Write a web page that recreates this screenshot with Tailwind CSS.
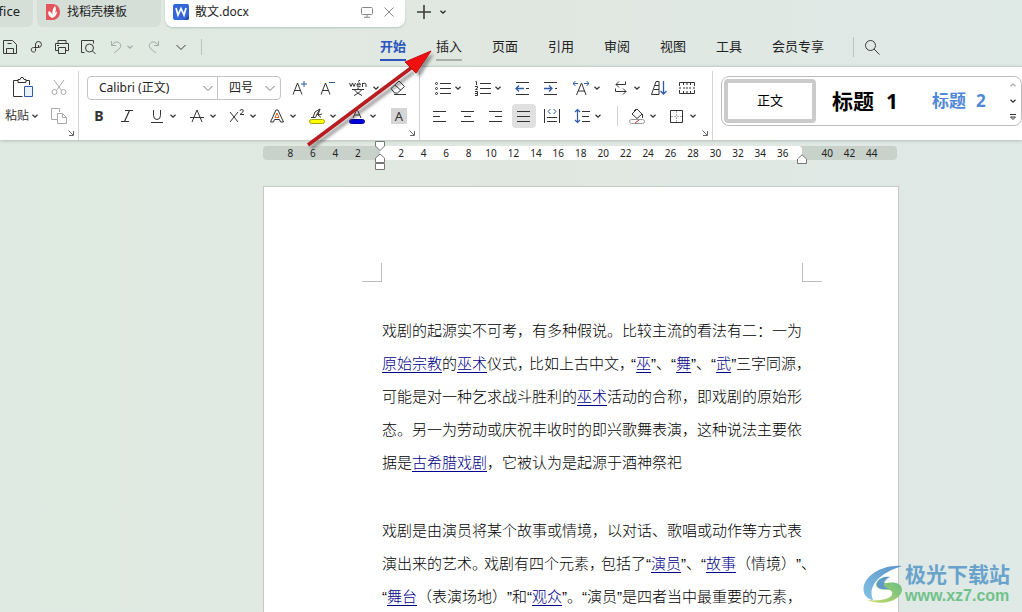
<!DOCTYPE html>
<html lang="zh-CN">
<head>
<meta charset="utf-8">
<title>散文.docx</title>
<script src="https://cdn.jsdelivr.net/npm/@tailwindcss/browser@4"></script>
</head>
<body class="relative flex h-screen flex-col overflow-hidden bg-linear-to-r from-[#dfebe2] via-[#e0e7e1] to-[#dfe9e6] font-['Noto_Sans','Noto_Sans_CJK_SC',sans-serif] text-xs text-[#222]">
<svg class="hidden">
  <symbol id="chev" viewBox="0 0 8 8"><path d="M1.500 2.800 4 5.200 6.500 2.800" fill="none" stroke="currentColor" stroke-width="1.300"/></symbol>
  <symbol id="thin" viewBox="0 0 12 12"><path d="M1.500 4 6 8.500 10.500 4" fill="none" stroke="currentColor"/></symbol>
  <symbol id="launch" viewBox="0 0 6 6"><path d="M.5.5 5 5M5.500 1v4.500H1" fill="none" stroke="#666"/></symbol>
</svg>

<!-- Document tabs -->
<header class="flex h-[27px] shrink-0 items-stretch">
  <button class="flex w-[33px] items-center justify-end overflow-hidden rounded-br-md bg-[#d5dfd8] pr-[13px] pb-[3px] text-[13px]">Office</button>
  <button class="ml-1 flex w-[124px] items-center gap-1.5 rounded-b-md bg-[#d5dfd8] pb-[3px] pl-2">
    <svg class="size-4" viewBox="0 0 16 16"><path d="M1 0h8q6 2 6 8t-6 8H1z" fill="#e5565b"/><path d="M7.500 14C3 12 2.500 9 4 7c2 1 3 2 3.500 4C7 7 8 4 10 2c2 3 .5 7-2 9 1-2 2-3 4-3.500 0 3-1.500 5-4.500 6.500" fill="#fff"/></svg>
    <span>找稻壳模板</span>
  </button>
  <div class="ml-1 flex w-60 items-center rounded-b-lg bg-white pr-2.5 pb-[3px] pl-2 shadow-[0_1px_2px_#b9c5bd]">
    <svg class="size-4" viewBox="0 0 16 16"><rect width="16" height="16" rx="2" fill="#3566d8"/><path d="M11 16h3q2 0 2-2v-3z" fill="#244cae"/><path d="m3 4 2 7 3-6.500L11 11l2-7" fill="none" stroke="#fff" stroke-width="1.700"/></svg>
    <span class="ml-1.5 flex-1">散文.docx</span>
    <button aria-label="窗口"><svg class="h-3 w-3" viewBox="0 0 12 12"><path d="M1.500 1.500h9q1 0 1 1v5q0 1-1 1h-9q-1 0-1-1v-5q0-1 1-1M6 8.500V11M3 11.300h6" fill="none" stroke="#888"/></svg></button>
    <button aria-label="关闭" class="ml-2.5"><svg class="size-3" viewBox="0 0 12 12"><path d="m1.500 1.500 9 9m0-9-9 9" stroke="#888"/></svg></button>
  </div>
  <button aria-label="新建" class="ml-3 pb-[3px]"><svg class="size-3.5" viewBox="0 0 14 14"><path d="M7 0v14M0 7h14" stroke="#3c3c3c" stroke-width="1.600"/></svg></button>
  <button aria-label="更多" class="ml-2 pb-[3px]"><svg class="size-2"><use href="#chev"/></svg></button>
</header>

<!-- Quick access and menu -->
<nav class="flex h-[39px] shrink-0 items-center text-[13px]">
  <div class="flex w-[380px] items-center text-[#3a3a3a]">
    <button aria-label="保存" class="ml-[3px]"><svg class="size-4 fill-none stroke-current" viewBox="0 0 16 16"><path d="M.5 1.500h9l4 4v9H.5zM3.500 14.500v-5h7v5M4.500 4.500h4"/></svg></button>
    <button aria-label="输出" class="ml-2.5"><svg class="size-4 fill-none stroke-current" viewBox="0 0 16 16"><path d="M6.500 9.500V5a3 3 0 1 1 3 3.500H4.500a2.300 2.300 0 1 0 2 3.500v-2.500M9.500 6v2.500"/></svg></button>
    <button aria-label="打印" class="ml-[9px]"><svg class="size-4 fill-none stroke-current" viewBox="0 0 16 16"><path d="M4 5V1.500h8V5M4 11.500H1.500v-7h13v7H12M4.500 8.500h7v6h-7zM3 6.500h2"/></svg></button>
    <button aria-label="打印预览" class="ml-2.5"><svg class="size-4 fill-none stroke-current" viewBox="0 0 16 16"><path d="M4.500 13.500H1.500v-12h12v3"/><circle cx="9.500" cy="9" r="4"/><path d="m12.500 12 3 3"/></svg></button>
    <button aria-label="撤销" class="ml-3.5 flex items-center gap-1 text-[#a5aca7]"><svg class="h-4 w-3 fill-none stroke-current" viewBox="0 0 12 16"><path d="M1.500 2v4.500H6M1.500 6.500Q5 1.500 9 3.500q3.500 3 0 6.500l-5 4"/></svg><svg class="size-2"><use href="#chev"/></svg></button>
    <button aria-label="恢复" class="ml-3.5 text-[#a5aca7]"><svg class="h-4 w-3 fill-none stroke-current" viewBox="0 0 12 16"><path d="M10.500 2v4.500H6M10.500 6.500Q7 1.500 3 3.500-.5 6.500 3 10l5 4"/></svg></button>
    <button aria-label="自定义" class="ml-[15px]"><svg class="size-3"><use href="#thin"/></svg></button>
    <span class="ml-3.5 h-4 w-px bg-[#bac4bd]"></span>
  </div>
  <div class="flex items-center gap-[30px] whitespace-nowrap">
    <button class="h-7 border-y-2 border-t-transparent border-b-[#2a55bd] font-bold text-[#2a55bd]">开始</button>
    <button class="h-7 border-y-2 border-t-transparent border-b-[#a9b0ab]">插入</button>
    <button>页面</button><button>引用</button><button>审阅</button><button>视图</button><button>工具</button><button>会员专享</button>
  </div>
  <span class="ml-[29px] h-5 w-px bg-[#bac4bd]"></span>
  <button aria-label="搜索" class="ml-2.5"><svg class="size-4 fill-none stroke-[#3a3a3a]" viewBox="0 0 16 16"><circle cx="6.500" cy="6.500" r="5"/><path d="m10 10 5.500 5.500"/></svg></button>
</nav>

<!-- Ribbon -->
<section class="flex h-[74px] shrink-0 border-t border-[#c6cdc8] bg-white text-[#333] shadow-[0_1px_3px_#b4beb7]">
  <div class="relative mt-1 grid w-[79px] grid-cols-[46px_25px] content-start border-r border-[#d4d4d4] pt-[3px]">
    <button aria-label="粘贴" class="flex h-7 items-center justify-center"><svg class="h-6 w-6 fill-none stroke-[#333]" viewBox="0 0 24 24"><path d="M7 4.500H2.500v16h9M15 4.500h3.500V9M7 3.500h2l1-2h2l1 2h2v3H7z"/><path d="M13.500 10.500h8v10h-8z" stroke="#2f5aa8" fill="#eaf1fc"/></svg></button>
    <button aria-label="剪切" class="flex h-7 items-center justify-center"><svg class="size-4 fill-none stroke-[#aaa]" viewBox="0 0 16 16"><path d="m3 0 7.500 10.500M13 0 5.500 10.500"/><circle cx="3.500" cy="12" r="2.500"/><circle cx="12.500" cy="12" r="2.500"/></svg></button>
    <button class="flex h-7 items-center pl-[5px] whitespace-nowrap">粘贴<svg class="ml-0.5 size-2"><use href="#chev"/></svg></button>
    <button aria-label="复制" class="flex h-7 items-center justify-center"><svg class="size-4 fill-none stroke-[#aaa]" viewBox="0 0 16 16"><path d="M6 11.500H.5V.5h8V4M6.500 5.500h5l4 4v6h-9zM11.500 5.500v4h4"/></svg></button>
    <svg class="absolute right-1 bottom-1 size-1.5"><use href="#launch"/></svg>
  </div>

  <div class="relative mt-1 w-[341px] shrink-0 border-r border-[#d4d4d4] pt-[3px] pl-1.5">
    <div class="flex h-7 items-center">
      <div class="ml-0.5 flex h-6 w-[194px] items-center rounded-sm border border-[#c4c4c4] text-[#222]">
        <button class="flex h-full flex-1 items-center justify-between border-r border-[#c4c4c4] pr-[3px] pl-[11px]"><span>Calibri (正文)</span><svg class="size-3 text-[#777]"><use href="#thin"/></svg></button>
        <button class="flex h-full w-[62px] items-center justify-between pr-1 pl-[11px]"><span>四号</span><svg class="size-3 text-[#777]"><use href="#thin"/></svg></button>
      </div>
      <button aria-label="增大字号" class="ml-[5px] flex w-7 justify-center"><svg class="size-4 fill-none stroke-current" viewBox="0 0 16 16"><path d="M1 14.500 5.500 3 10 14.500M2.500 10.500h6"/><path d="M12 1v6M9 4h6" stroke="#2f5aa8"/></svg></button>
      <button aria-label="减小字号" class="flex w-7 justify-center"><svg class="size-4 fill-none stroke-current" viewBox="0 0 16 16"><path d="M1 14.500 5.500 3 10 14.500M2.500 10.500h6"/><path d="M9 2.500h6" stroke="#2f5aa8"/></svg></button>
      <button aria-label="拼音指南" class="ml-0.5 flex w-10 items-center"><svg class="h-4 w-[18px] ml-[5px] fill-none stroke-current" viewBox="0 0 18 16"><path d="m.5 3 1.500 3.500L3.500 3 5 6.500 6.500 3M8 4.800h3.500Q11.500 3 9.800 3T8 5t1.800 1.700H11.500M9 1.500 11 .2M13.500 7V3M13.500 4q3.500-2 3.500 1v2M9 7.500v2M3 9.500h12M5 9.500q3 4 8 6M13 9.500q-3 4-8 6"/></svg><svg class="ml-[5px] size-2"><use href="#chev"/></svg></button>
      <button aria-label="清除格式" class="flex w-7 justify-center"><svg class="size-4 fill-none stroke-current" viewBox="0 0 16 16"><path d="M1 8.500 9 1l5.500 5.500-7 6.500h-3zM5 5l6 5.500M4 14.500h12"/></svg></button>
    </div>
    <div class="flex h-7 items-center">
      <button aria-label="加粗" class="w-7 text-center text-sm font-bold">B</button>
      <button aria-label="倾斜" class="flex w-7 justify-center"><svg class="size-3 fill-none stroke-current" viewBox="0 0 12 12"><path d="M4 .5h8M0 11.500h8M8.500.5l-5 11" stroke-width="1.200"/></svg></button>
      <div class="ml-0.5 flex">
        <button aria-label="下划线" class="flex w-10 items-center pl-1.5"><svg class="size-4 fill-none stroke-current" viewBox="0 0 16 16"><path d="M4.500 2v5.500q0 4 3.500 4t3.500-4V2M2 14.500h12"/></svg><svg class="ml-1 size-2"><use href="#chev"/></svg></button>
        <button aria-label="删除线" class="flex w-10 items-center pl-1.5"><svg class="size-4 fill-none stroke-current" viewBox="0 0 16 16"><path d="M3 14 8 2l5 12M1 9.500h14"/></svg><svg class="ml-1 size-2"><use href="#chev"/></svg></button>
        <button aria-label="上标" class="flex w-10 items-center pl-1.5"><svg class="size-4 fill-none stroke-current" viewBox="0 0 16 16"><path d="m1 4 8 10M9 4 1 14M11 3q0-1.500 1.700-1.500T14.300 3q0 1-3.300 3.500h4"/></svg><svg class="ml-1 size-2"><use href="#chev"/></svg></button>
        <button aria-label="文字效果" class="flex w-10 items-center pl-1.5"><svg class="size-4 fill-none stroke-current" viewBox="0 0 16 16"><path d="M1.500 14 7 2h2l5.500 12h-3l-1-2.500h-5L4.500 14z"/><path d="M6 9.500 8 5l2 4.500z" stroke="#d8672e"/></svg><svg class="ml-1 size-2"><use href="#chev"/></svg></button>
        <button aria-label="突出显示" class="flex w-10 items-center pl-1.5"><svg class="size-4 fill-none stroke-current" viewBox="0 0 16 16"><path d="M2 9.500h4.500L8 6M4 9.500 6 4l5-3-3 5 4 3.500M11 1l-2 6 4-1"/><rect x=".5" y="11.500" width="15" height="4" rx="2" fill="#ff0" stroke="#a5a500"/></svg><svg class="ml-1 size-2"><use href="#chev"/></svg></button>
        <button aria-label="字体颜色" class="flex w-10 items-center pl-1.5"><svg class="size-4 fill-none stroke-current" viewBox="0 0 16 16"><path d="m4 10 4-9 4 9M5.500 7h5"/><rect x=".5" y="11.500" width="15" height="4" rx="2" fill="#0000e0" stroke="#0000a0"/></svg><svg class="ml-1 size-2"><use href="#chev"/></svg></button>
      </div>
      <button aria-label="字符底纹" class="ml-2 flex size-4 items-center justify-center bg-[#d6d6d6] text-[13px] leading-4">A</button>
    </div>
    <svg class="absolute right-1 bottom-1 size-1.5"><use href="#launch"/></svg>
  </div>

  <div class="relative mt-1 w-[293px] shrink-0 border-r border-[#d4d4d4] pt-[3px] pl-1.5">
    <div class="flex h-7 items-center">
      <button aria-label="项目符号" class="ml-[3px] flex w-10 items-center pl-1.5"><svg class="size-4 fill-none stroke-current" viewBox="0 0 16 16"><path d="M5 3.500h11M5 8.500h11M5 13.500h11"/><circle cx="1.500" cy="3.500" r="1"/><circle cx="1.500" cy="8.500" r="1"/><circle cx="1.500" cy="13.500" r="1"/></svg><svg class="ml-[3px] size-2"><use href="#chev"/></svg></button>
      <button aria-label="编号" class="flex w-10 items-center pl-1.5"><svg class="size-4 fill-none stroke-current" viewBox="0 0 16 16"><path d="M5 3.500h11M5 8.500h11M5 13.500h11M.5 1.500h1v3.500M0 6.500h2.500v1.500L.5 9.500h2M0 11.500h2.500v4H0m0-2h2"/></svg><svg class="ml-[3px] size-2"><use href="#chev"/></svg></button>
      <button aria-label="减少缩进" class="flex w-7 justify-center"><svg class="size-4 fill-none stroke-current" viewBox="0 0 16 16"><path d="M1 2.500h13M11 8.500h3M1 14.500h13"/><path d="M9 8.500H1m3-3-3 3 3 3" stroke="#2f5aa8" stroke-width="1.300"/></svg></button>
      <button aria-label="增加缩进" class="flex w-7 justify-center"><svg class="size-4 fill-none stroke-current" viewBox="0 0 16 16"><path d="M1 2.500h13M12 8.500h2M1 14.500h13"/><path d="M1 8.500h8m-3-3 3 3-3 3" stroke="#2f5aa8" stroke-width="1.300"/></svg></button>
      <button aria-label="中文版式" class="flex w-10 items-center pl-2"><svg class="size-4 fill-none stroke-current" viewBox="0 0 16 16"><path d="M3.500 15 8.500 3l4.500 12M5 11h7"/><path d="M0 3.500h5M2.500 1 0 3.500 2.500 6M11 3.500h5M13.500 1 16 3.500 13.500 6" stroke="#2f5aa8"/></svg><svg class="ml-1 size-2"><use href="#chev"/></svg></button>
      <button aria-label="换行" class="flex w-10 items-center pl-2"><svg class="size-4 fill-none stroke-current" viewBox="0 0 16 16"><path d="M6 1.500 3 4.500l3 3M3 4.500h9.500v-3M2.500 8.500v3H13M10 8.500l3 3-3 3"/></svg><svg class="ml-1 size-2"><use href="#chev"/></svg></button>
      <button aria-label="排序" class="flex w-7 justify-center"><svg class="size-4 fill-none stroke-current" viewBox="0 0 16 16"><path d="M.5 14.500 5 1.500h3v13zM4 5.500h4M3 9.500h5"/><path d="M12.500 1v13m-3-3 3 3 3-3" stroke="#2f5aa8" stroke-width="1.300"/></svg></button>
      <button aria-label="显示标记" class="flex w-7 justify-center"><svg class="size-4 fill-none stroke-current" viewBox="0 0 16 16"><path d="M.5 6V2.500h15V6M.5 10v3.500h15V10M4.500 2v3M8 2v3M11.500 2v3M4.500 11v3M8 11v3M11.500 11v3M0 8h2M4 8h2M7 8h2M10 8h2M14 8h2"/></svg></button>
    </div>
    <div class="flex h-7 items-center">
      <button aria-label="左对齐" class="flex w-7 justify-center"><svg class="size-4 stroke-current" viewBox="0 0 16 16"><path d="M1 3.500h13M1 8.500h7M1 13.500h13"/></svg></button>
      <button aria-label="居中" class="flex w-7 justify-center"><svg class="size-4 stroke-current" viewBox="0 0 16 16"><path d="M1 3.500h13M4 8.500h7M1 13.500h13"/></svg></button>
      <button aria-label="右对齐" class="flex w-7 justify-center"><svg class="size-4 stroke-current" viewBox="0 0 16 16"><path d="M1 3.500h13M7 8.500h7M1 13.500h13"/></svg></button>
      <button aria-label="两端对齐" class="mx-0.5 flex size-6 items-center justify-center rounded-sm bg-[#e0e0e0]"><svg class="size-4 stroke-current" viewBox="0 0 16 16"><path d="M1 3.500h13M1 8.500h13M1 13.500h13"/></svg></button>
      <button aria-label="分散对齐" class="flex w-7 justify-center"><svg class="size-4 fill-none stroke-current" viewBox="0 0 16 16"><path d="M.5 1v14M15.500 1v14M3 9.500h10M3 13.500h10"/><path d="M6.500 1 4 3.500 6.500 6M9.500 1 12 3.500 9.500 6" stroke="#2f5aa8"/></svg></button>
      <button aria-label="行距" class="flex w-10 items-center pl-2"><svg class="size-4 fill-none stroke-current" viewBox="0 0 16 16"><path d="M8 3.500h8M8 8.500h7M8 13.500h8"/><path d="M3.500 1.500v13M1 4l2.500-2.500L6 4M1 12l2.500 2.500L6 12" stroke="#2f5aa8" stroke-width="1.200"/></svg><svg class="ml-1 size-2"><use href="#chev"/></svg></button>
      <span class="mx-[11px] h-5 w-px bg-[#d0d0d0]"></span>
      <button aria-label="底纹" class="flex w-10 items-center"><svg class="size-4 fill-none stroke-current" viewBox="0 0 16 16"><path d="m3 6 5-5 5 5-5 4.500zM5 3l2-2M13.500 6v4"/><rect x=".5" y="11.500" width="15" height="4" rx="2" stroke="#999"/><path d="m6 15 4-3" stroke="#d33"/></svg><svg class="ml-1 size-2"><use href="#chev"/></svg></button>
      <button aria-label="边框" class="flex w-10 items-center"><svg class="size-4 fill-none stroke-current" viewBox="0 0 16 16"><path d="M1.500 2.500h12v12h-12z"/><path d="M7.500 3v11M2 8.500h11" stroke="#aaa" stroke-dasharray="2 1"/></svg><svg class="ml-1 size-2"><use href="#chev"/></svg></button>
    </div>
    <svg class="absolute right-1 bottom-1 size-1.5"><use href="#launch"/></svg>
  </div>

  <div class="mt-[9px] ml-2 flex h-[50px] flex-1 items-center rounded-lg border border-[#bdbdbd] pl-0.5">
    <button class="h-11 w-[92px] rounded-sm border-4 border-[#cbcbcb] bg-white text-[13px] text-black">正文</button>
    <button class="ml-4 flex items-center gap-3 text-[21px] font-bold text-black"><span>标题</span><span>1</span></button>
    <button class="ml-[34px] flex items-center gap-2.5 text-[17px] font-bold text-[#4f88d6]"><span>标题</span><span>2</span></button>
    <div class="ml-auto flex flex-col items-center gap-2 pr-1">
      <button aria-label="上一行"><svg class="size-2 rotate-180 text-[#aaa]"><use href="#chev"/></svg></button>
      <button aria-label="下一行"><svg class="size-2"><use href="#chev"/></svg></button>
      <button aria-label="展开"><svg class="size-2 fill-none stroke-current" viewBox="0 0 8 8"><path d="M1 1.500h6M1.500 4 4 6.500 6.500 4z"/></svg></button>
    </div>
  </div>
</section>

<!-- Ruler and document -->
<main class="flex min-h-0 flex-1 flex-col pt-1.5 pr-[123px] pl-[263px]">
  <div class="relative mr-0.5 flex h-3.5 shrink-0 rounded-sm bg-[#c8d2cb] text-center text-[10px] leading-[14px] text-[#222]">
    <div class="grid w-[117px] grid-cols-4 pr-[11px] pl-4"><span>8</span><span>6</span><span>4</span><span>2</span></div>
    <div class="grid flex-1 grid-cols-[repeat(18,minmax(0,1fr))] rounded-r-sm bg-white pr-2 pl-2.5"><span>2</span><span>4</span><span>6</span><span>8</span><span>10</span><span>12</span><span>14</span><span>16</span><span>18</span><span>20</span><span>22</span><span>24</span><span>26</span><span>28</span><span>30</span><span>32</span><span>34</span><span>36</span></div>
    <div class="grid w-[95px] grid-cols-3 px-3.5"><span>40</span><span>42</span><span>44</span></div>
    <svg class="absolute -top-[5px] left-[112px] h-[29px] w-2.5 fill-white stroke-[#777]" viewBox="0 0 10 29"><path d="M.5.5h9V5L5 9.500.5 5zM.5 21.500V17L5 13l4.500 4v4.500zM.5 22.500h9v6h-9z"/></svg>
    <svg class="absolute top-2 right-[90px] h-[10px] w-2.5 fill-white stroke-[#777]" viewBox="0 0 10 10"><path d="M.5 9.500V5L5 .8 9.500 5v4.500z"/></svg>
  </div>
  <article class="mt-[26px] min-h-0 flex-1 border border-b-0 border-[#c3c9c5] bg-white pt-[76px] font-['Liberation_Sans','Noto_Sans_CJK_SC',sans-serif] text-[15px] leading-[33px] font-light whitespace-nowrap text-black [text-spacing-trim:space-all]">
    <div class="mr-[76px] ml-[98px] flex justify-between"><span class="h-[19px] w-5 border-r border-b border-[#bbb]"></span><span class="h-[19px] w-5 border-b border-l border-[#bbb]"></span></div>
    <div class="pt-8 pl-[118px]">
      <p>戏剧的起源实不可考，有多种假说。比较主流的看法有二：一为<br><a href="#" class="text-[#00008b] underline underline-offset-3">原始宗教</a>的<a href="#" class="text-[#00008b] underline underline-offset-3">巫术</a>仪式<span class="inline-block w-3">，</span>比如上古中文<span class="inline-block w-3">，</span>“<a href="#" class="text-[#00008b] underline underline-offset-3">巫</a>”、“<a href="#" class="text-[#00008b] underline underline-offset-3">舞</a>”、“<a href="#" class="text-[#00008b] underline underline-offset-3">武</a>”三字同源，<br>可能是对一种乞求战斗胜利的<a href="#" class="text-[#00008b] underline underline-offset-3">巫术</a>活动的合称，即戏剧的原始形<br>态。另一为劳动或庆祝丰收时的即兴歌舞表演，这种说法主要依<br>据是<a href="#" class="text-[#00008b] underline underline-offset-3">古希腊戏剧</a>，它被认为是起源于酒神祭祀</p>
      <p class="mt-[35px]">戏剧是由演员将某个故事或情境，以对话、歌唱或动作等方式表<br>演出来的艺术<span class="inline-block w-3">。</span>戏剧有四个元素<span class="inline-block w-3">，</span>包括了“<a href="#" class="text-[#00008b] underline underline-offset-3">演员</a>”、“<a href="#" class="text-[#00008b] underline underline-offset-3">故事</a>（情境）”、<br>“<a href="#" class="text-[#00008b] underline underline-offset-3">舞台</a>（表演场地）”和“<a href="#" class="text-[#00008b] underline underline-offset-3">观众</a>”。“演员”是四者当中最重要的元素，</p>
    </div>
  </article>
</main>

<!-- Pointer arrow over the ribbon -->
<svg class="pointer-events-none absolute top-10 left-[300px] h-28 w-36" viewBox="0 0 144 112">
  <defs><filter id="soft"><feGaussianBlur stdDeviation="1.500"/></filter></defs>
  <g transform="translate(3 3)" opacity=".45" filter="url(#soft)"><path d="m8 105 103-76" stroke="#333" stroke-width="4"/><path d="m131 11-26 10 12 13z" fill="#333"/></g>
  <path d="m8 105 103-77" stroke="#b81c20" stroke-width="3.500"/><path d="m131 11-26 11 5 5 6 6z" fill="#f01010" stroke="#c01010"/>
</svg>

<!-- Site mark -->
<div class="absolute right-3 bottom-1.5 flex items-center gap-0.5">
  <svg class="h-10 w-10" viewBox="0 0 40 40">
    <defs><linearGradient id="g1" x1="1" y1="0" x2="0" y2="1"><stop stop-color="#5a93c8"/><stop offset="1" stop-color="#83c3e4"/></linearGradient><linearGradient id="g2" x1="0" y1="1" x2="1" y2="0"><stop stop-color="#c9da65"/><stop offset="1" stop-color="#5dba86"/></linearGradient></defs>
    <path d="M39 2C18 0-3 14 1 29c2 5 7 7 9 7-6-13 6-27 29-34" fill="url(#g1)"/>
    <path d="M24 13c-9 0-14 8-9 11 4 3 12 0 14 4 2 5-7 10-25 8 19 7 34-1 35-10 0-8-10-8-16-7-4 0-4-3 1-6" fill="url(#g2)"/>
    <path d="M27 13c-9-2-17 7-11 11 2 2 7 1 10 1-6-2-8-7 1-12" fill="#5e9bcb"/>
  </svg>
  <div class="flex flex-col font-bold">
    <span class="text-[21px] leading-6 text-[#69a3cb]">极光下载站</span>
    <span class="font-['Liberation_Sans'] text-base leading-5 text-[#70c18a]">www.xz7.com</span>
  </div>
</div>
</body>
</html>
